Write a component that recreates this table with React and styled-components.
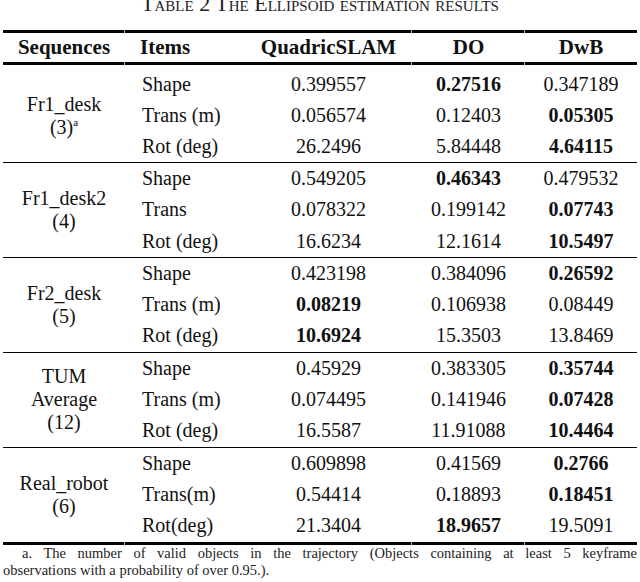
import React from 'react';
import styled, { createGlobalStyle, css } from 'styled-components';

const serif = `"Liberation Serif", "Times New Roman", Times, serif`;

const GlobalStyle = createGlobalStyle`
body{
  margin:0;
  background:#fff;
  font-family:${serif};
}
table, th, td{
  font-family:${serif};
}
`;

const Page = styled.div`
width:634px;
padding:0 3px;
font-family:${serif};
color:#111;
`;

const Title = styled.div`
margin-top:-7px;
height:37px;
font-family:${serif};
font-size:22px;
line-height:22px;
font-variant:small-caps;
text-align:center;
color:#222;
`;

const Table = styled.table`
width:634px;
border-collapse:separate;
border-spacing:0;
table-layout:fixed;
font-family:${serif};
color:#111;
`;

const tick = css`
&::before, &::after{
  content:"";
  position:absolute;
  left:-1px;
  width:1px;
  height:3px;
  background:#bdbdbd;
}
&::before{ top:-3px; }
&::after{ bottom:-3px; }
`;

const Head = styled.th`
position:relative;
padding:0 0 0 ${p => p.$pad || 0}px;
border-top:3px solid #000;
border-bottom:3px solid #000;
line-height:29px;
font-family:${serif};
font-size:21px;
font-weight:700;
text-align:${p => p.$align || 'center'};
${p => p.$tick && tick}
`;

const Cell = styled.td`
position:relative;
padding:${p => p.$lead ? 4 : 0}px 0 0 ${p => p.$pad || 0}px;
height:${p => p.$tall ? 31 : 31.3}px;
line-height:${p => p.$tall ? 31 : 31.3}px;
font-family:${serif};
font-size:20px;
font-weight:${p => p.$bold ? 700 : 400};
text-align:${p => p.$align || 'center'};
white-space:nowrap;
border-bottom:${p => p.$end ? `${p.$end}px solid #000` : 'none'};
${p => p.$tick && p.$end === 3 && css`
  &::after{
    content:"";
    position:absolute;
    left:-1px;
    bottom:-3px;
    width:1px;
    height:3px;
    background:#bdbdbd;
  }
`}
`;

const SeqCell = styled.td`
padding:${p => p.$lead ? 4 : 0}px 0 0;
font-family:${serif};
font-size:20px;
text-align:center;
vertical-align:middle;
border-bottom:${p => p.$end}px solid #000;
`;

const SeqLabel = styled.div`
line-height:23px;
`;

const Sup = styled.sup`
font-size:11px;
line-height:0;
vertical-align:8px;
`;

const Note = styled.div`
font-family:${serif};
font-size:14.5px;
line-height:17px;
color:#222;
`;

const NoteFirst = styled.div`
padding-left:19px;
text-align:justify;
text-align-last:justify;
`;

const Bold = styled.b`
font-weight:700;
`;

const groups = [
  {
    label: [<>Fr1_desk</>, <>(3)<Sup>a</Sup></>],
    tall: true,
    rows: [
      ['Shape', '0.399557', ['0.27516'], '0.347189'],
      ['Trans (m)', '0.056574', '0.12403', ['0.05305']],
      ['Rot (deg)', '26.2496', '5.84448', ['4.64115']],
    ],
  },
  {
    label: ['Fr1_desk2', '(4)'],
    rows: [
      ['Shape', '0.549205', ['0.46343'], '0.479532'],
      ['Trans', '0.078322', '0.199142', ['0.07743']],
      ['Rot (deg)', '16.6234', '12.1614', ['10.5497']],
    ],
  },
  {
    label: ['Fr2_desk', '(5)'],
    rows: [
      ['Shape', '0.423198', '0.384096', ['0.26592']],
      ['Trans (m)', ['0.08219'], '0.106938', '0.08449'],
      ['Rot (deg)', ['10.6924'], '15.3503', '13.8469'],
    ],
  },
  {
    label: ['TUM', 'Average', '(12)'],
    rows: [
      ['Shape', '0.45929', '0.383305', ['0.35744']],
      ['Trans (m)', '0.074495', '0.141946', ['0.07428']],
      ['Rot (deg)', '16.5587', '11.91088', ['10.4464']],
    ],
  },
  {
    label: ['Real_robot', '(6)'],
    rows: [
      ['Shape', '0.609898', '0.41569', ['0.2766']],
      ['Trans(m)', '0.54414', <>0<Bold>.</Bold>18893</>, ['0.18451']],
      ['Rot(deg)', '21.3404', ['18.9657'], '19.5091'],
    ],
  },
];

const ticks = [false, false, true, true];

const App = () => {
  return <Page>
    <GlobalStyle/>
    <Title>Table 2 The Ellipsoid estimation results</Title>
    <Table>
      <colgroup>
        <col style={{width:122}}/>
        <col style={{width:120}}/>
        <col style={{width:167}}/>
        <col style={{width:113}}/>
        <col style={{width:112}}/>
      </colgroup>
      <thead>
        <tr>
          <Head>Sequences</Head>
          <Head $tick $align="left" $pad={15}>Items</Head>
          <Head>QuadricSLAM</Head>
          <Head $tick>DO</Head>
          <Head $tick>DwB</Head>
        </tr>
      </thead>
      <tbody>
        {groups.map((g, gi) => {
          const last = gi === groups.length - 1;
          const endW = last ? 3 : 1;
          return g.rows.map((r, ri) => {
            const end = ri === 2 ? endW : 0;
            const lead = g.tall && ri === 0;
            return <tr key={gi + '-' + ri}>
              {ri === 0 && <SeqCell rowSpan={3} $end={endW} $lead={g.tall}>
                {g.label.map((l, li) => <SeqLabel key={li}>{l}</SeqLabel>)}
              </SeqCell>}
              <Cell $align="left" $pad={17} $tall={g.tall} $lead={lead} $end={end} $tick>{r[0]}</Cell>
              {r.slice(1).map((v, vi) => {
                const bold = Array.isArray(v);
                return <Cell key={vi} $tall={g.tall} $lead={lead} $end={end} $bold={bold} $tick={ticks[vi + 1]}>
                  {bold ? v[0] : v}
                </Cell>
              })}
            </tr>
          })
        })}
      </tbody>
    </Table>
    <Note>
      <NoteFirst>a. The number of valid objects in the trajectory (Objects containing at least 5 keyframe</NoteFirst>
      <div>observations with a probability of over 0.95.).</div>
    </Note>
  </Page>
}

export default App
